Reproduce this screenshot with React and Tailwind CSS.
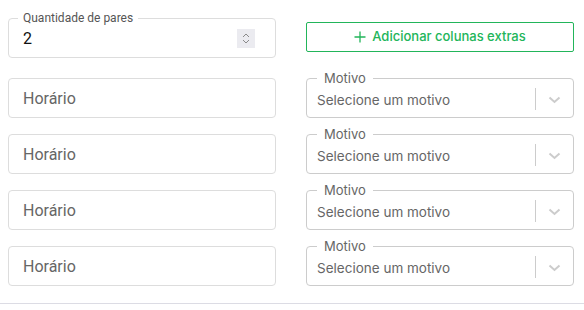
import React from 'react';

const rows = [0, 1, 2, 3];

function Spinner() {
  return (
    <div className="w-[18px] h-[19px] bg-[#ebebf0] flex flex-col items-center justify-center gap-[1px]">
      <svg width="8" height="5" viewBox="0 0 8 5" fill="none">
        <path d="M1 4 L4 1 L7 4" stroke="#8a8a8a" strokeWidth="1" />
      </svg>
      <svg width="8" height="5" viewBox="0 0 8 5" fill="none">
        <path d="M1 1 L4 4 L7 1" stroke="#8a8a8a" strokeWidth="1" />
      </svg>
    </div>
  );
}

function MotivoSelect() {
  return (
    <div className="relative h-10 border border-[#cccccc] rounded flex items-center font-['Inter',sans-serif]">
      <span className="absolute -top-[9px] left-[10px] px-[7px] bg-white text-[13px] leading-4 text-[#666]">
        Motivo
      </span>
      <span className="flex-1 pl-[10px] pt-[4px] text-[13.5px] text-[#666]">Selecione um motivo</span>
      <div className="w-px h-[22px] bg-[#cccccc] mt-[2px]" />
      <div className="w-[37px] flex justify-center pt-[3px]">
        <svg width="13" height="8" viewBox="0 0 13 8" fill="none">
          <path d="M1.5 1.5 L6.5 6 L11.5 1.5" stroke="#cccccc" strokeWidth="2" />
        </svg>
      </div>
    </div>
  );
}

export default function App() {
  return (
    <div className="w-[584px] h-[310px] bg-white overflow-hidden">
      <div className="pl-2 pr-[10px] pt-[18px]">
        <div className="grid grid-cols-2 gap-x-[30px] items-start">
          <div className="relative h-10 border border-[#dddddd] rounded flex items-center pl-[14px] pr-[20px] font-['Roboto',sans-serif]">
            <span className="absolute -top-[9px] left-[9px] px-[5px] bg-white text-[12px] leading-4 text-[#555]">
              Quantidade de pares
            </span>
            <span className="flex-1 text-[16px] text-[#111] pt-[2px]">2</span>
            <Spinner />
          </div>
          <button className="mt-1 h-[30px] border border-[#22b55a] rounded-[2px] flex items-center justify-center gap-[6px] text-[#22b55a] text-[13px] font-medium font-['Inter',sans-serif]">
            <svg width="12" height="12" viewBox="0 0 12 12" fill="none">
              <path d="M6 0.5 V11.5 M0.5 6 H11.5" stroke="#22b55a" strokeWidth="1.3" />
            </svg>
            Adicionar colunas extras
          </button>
        </div>

        <div className="mt-5 flex flex-col gap-4">
          {rows.map((r) => (
            <div key={r} className="grid grid-cols-2 gap-x-[30px]">
              <div className="h-10 border border-[#dddddd] rounded flex items-center pl-[14px] pt-[1px] text-[16px] text-[#666] font-['Roboto',sans-serif]">
                Horário
              </div>
              <MotivoSelect />
            </div>
          ))}
        </div>
      </div>
      <div className="mt-[17px] h-px bg-[#dcdce4]" />
    </div>
  );
}
